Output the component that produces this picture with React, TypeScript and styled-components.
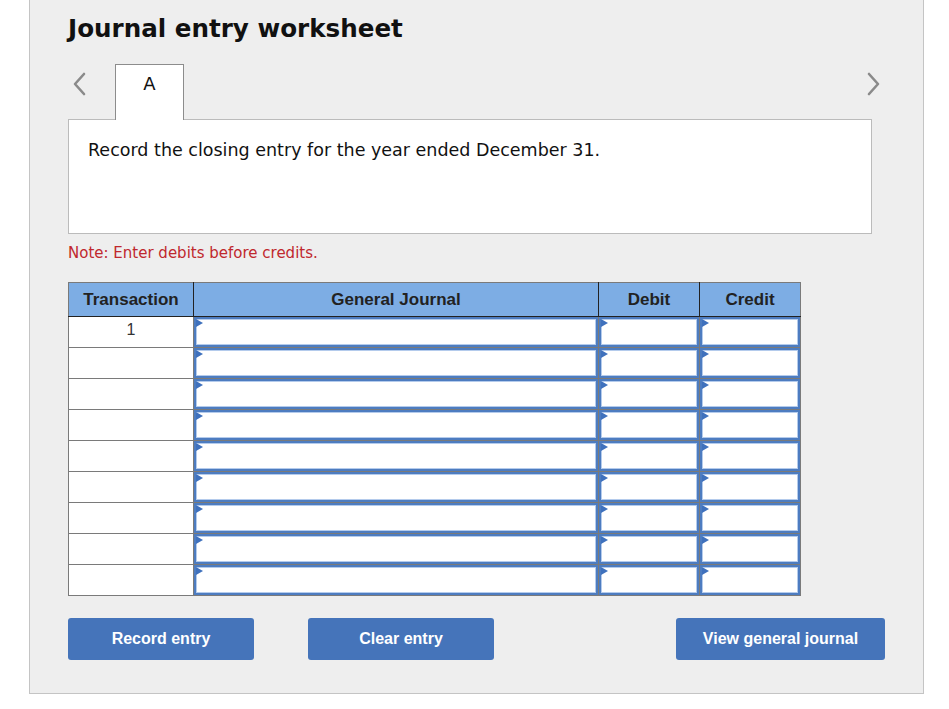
import React from "react";
import styled, { createGlobalStyle } from "styled-components";

const GlobalStyle = createGlobalStyle`
  html, body {
    margin: 0;
    padding: 0;
    background: #ffffff;
  }
`;

const Panel = styled.div`
  margin-left: 29px;
  width: 895px;
  box-sizing: border-box;
  padding: 15px 0 33px 38px;
  background: #eeeeee;
  border: 1px solid #c4c4c4;
  border-top: none;
`;

const Title = styled.h1`
  margin: 0;
  font-family: Verdana, "DejaVu Sans", sans-serif;
  font-weight: bold;
  font-size: 24.6px;
  line-height: 28px;
  color: #111;
`;

const TabRow = styled.div`
  display: flex;
  align-items: flex-start;
  width: 817px;
  height: 55px;
  margin-top: 21px;
`;

const ArrowSlot = styled.div`
  width: 47px;
  box-sizing: border-box;
  padding: 8px 0 0 4px;
`;

const RightSlot = styled.div`
  margin-left: auto;
  box-sizing: border-box;
  padding: 8px 4px 0 0;
`;

const Tab = styled.div`
  position: relative;
  z-index: 1;
  width: 69px;
  height: 56px;
  box-sizing: border-box;
  padding-top: 9px;
  background: #fff;
  border: 1px solid #8c8c8c;
  border-bottom: none;
  text-align: center;
  font-family: Verdana, "DejaVu Sans", sans-serif;
  font-size: 18px;
  line-height: 20px;
  color: #111;
`;

const PromptBox = styled.div`
  width: 804px;
  height: 115px;
  box-sizing: border-box;
  padding: 19px 19px;
  background: #fff;
  border: 1px solid #bbbbbb;
  font-family: Verdana, "DejaVu Sans", sans-serif;
  font-size: 17.5px;
  line-height: 22px;
  color: #111;
`;

const Note = styled.p`
  margin: 10px 0 0;
  font-family: Verdana, "DejaVu Sans", sans-serif;
  font-size: 15px;
  line-height: 18px;
  color: #c0282d;
`;

const Table = styled.table`
  margin-top: 20px;
  border-collapse: collapse;
  border: 1px solid #7a7a7a;
  font-family: Arial, "Liberation Sans", sans-serif;
`;

const Th = styled.th<{ $w: number }>`
  width: ${(p) => p.$w}px;
  height: 33px;
  padding: 0;
  background: #7dade4;
  border: 1px solid #222;
  border-top-color: #7a7a7a;
  font-size: 17px;
  font-weight: bold;
  color: #222;
  &:first-child {
    border-left-color: #7a7a7a;
  }
  &:last-child {
    border-right-color: #7a7a7a;
  }
`;

const NumCell = styled.td`
  height: 30px;
  padding: 0;
  background: #fff;
  border: 1px solid #7a7a7a;
  text-align: center;
  vertical-align: top;
  font-size: 16px;
  line-height: 26px;
  color: #333;
`;

const InputCell = styled.td`
  height: 30px;
  padding: 0;
  background: #fff;
  border: 1px solid #7a7a7a;
`;

const EntryBox = styled.div`
  position: relative;
  height: 30px;
  box-sizing: border-box;
  border: 2px solid #4d7cc0;
  box-shadow: inset 0 0 0 1px #b4cbec;
  background: #fff;
  &::before {
    content: "";
    position: absolute;
    left: 0;
    top: 0;
    border-style: solid;
    border-width: 4px 0 4px 7px;
    border-color: transparent transparent transparent #3f71bd;
  }
`;

const ButtonRow = styled.div`
  display: flex;
  width: 817px;
  margin-top: 22px;
`;

const LeftButtons = styled.div`
  display: flex;
  gap: 54px;
`;

const ActionButton = styled.button<{ $w: number }>`
  width: ${(p) => p.$w}px;
  height: 42px;
  border: none;
  border-radius: 3px;
  background: #4574ba;
  color: #fff;
  font-family: Arial, "Liberation Sans", sans-serif;
  font-weight: bold;
  font-size: 16px;
  cursor: pointer;
  &:last-child {
    margin-left: auto;
  }
`;

function Chevron({ dir }: { dir: "left" | "right" }) {
  const d = dir === "left" ? "M12 2 L3 12 L12 22" : "M2 2 L11 12 L2 22";
  return (
    <svg width="14" height="24" viewBox="0 0 14 24">
      <path d={d} fill="none" stroke="#8a8a8a" strokeWidth="2.6" strokeLinecap="round" strokeLinejoin="round" />
    </svg>
  );
}

export default function App() {
  const rows = Array.from({ length: 9 }, (_, i) => (i === 0 ? "1" : ""));

  return (
    <>
      <GlobalStyle />
      <Panel>
        <Title>Journal entry worksheet</Title>
        <TabRow>
          <ArrowSlot>
            <Chevron dir="left" />
          </ArrowSlot>
          <Tab>A</Tab>
          <RightSlot>
            <Chevron dir="right" />
          </RightSlot>
        </TabRow>
        <PromptBox>Record the closing entry for the year ended December 31.</PromptBox>
        <Note>Note: Enter debits before credits.</Note>
        <Table>
          <thead>
            <tr>
              <Th $w={124}>Transaction</Th>
              <Th $w={404}>General Journal</Th>
              <Th $w={100}>Debit</Th>
              <Th $w={100}>Credit</Th>
            </tr>
          </thead>
          <tbody>
            {rows.map((num, index) => (
              <tr key={index}>
                <NumCell>{num}</NumCell>
                <InputCell>
                  <EntryBox />
                </InputCell>
                <InputCell>
                  <EntryBox />
                </InputCell>
                <InputCell>
                  <EntryBox />
                </InputCell>
              </tr>
            ))}
          </tbody>
        </Table>
        <ButtonRow>
          <LeftButtons>
            <ActionButton $w={186}>Record entry</ActionButton>
            <ActionButton $w={186}>Clear entry</ActionButton>
          </LeftButtons>
          <ActionButton $w={209}>View general journal</ActionButton>
        </ButtonRow>
      </Panel>
    </>
  );
}
